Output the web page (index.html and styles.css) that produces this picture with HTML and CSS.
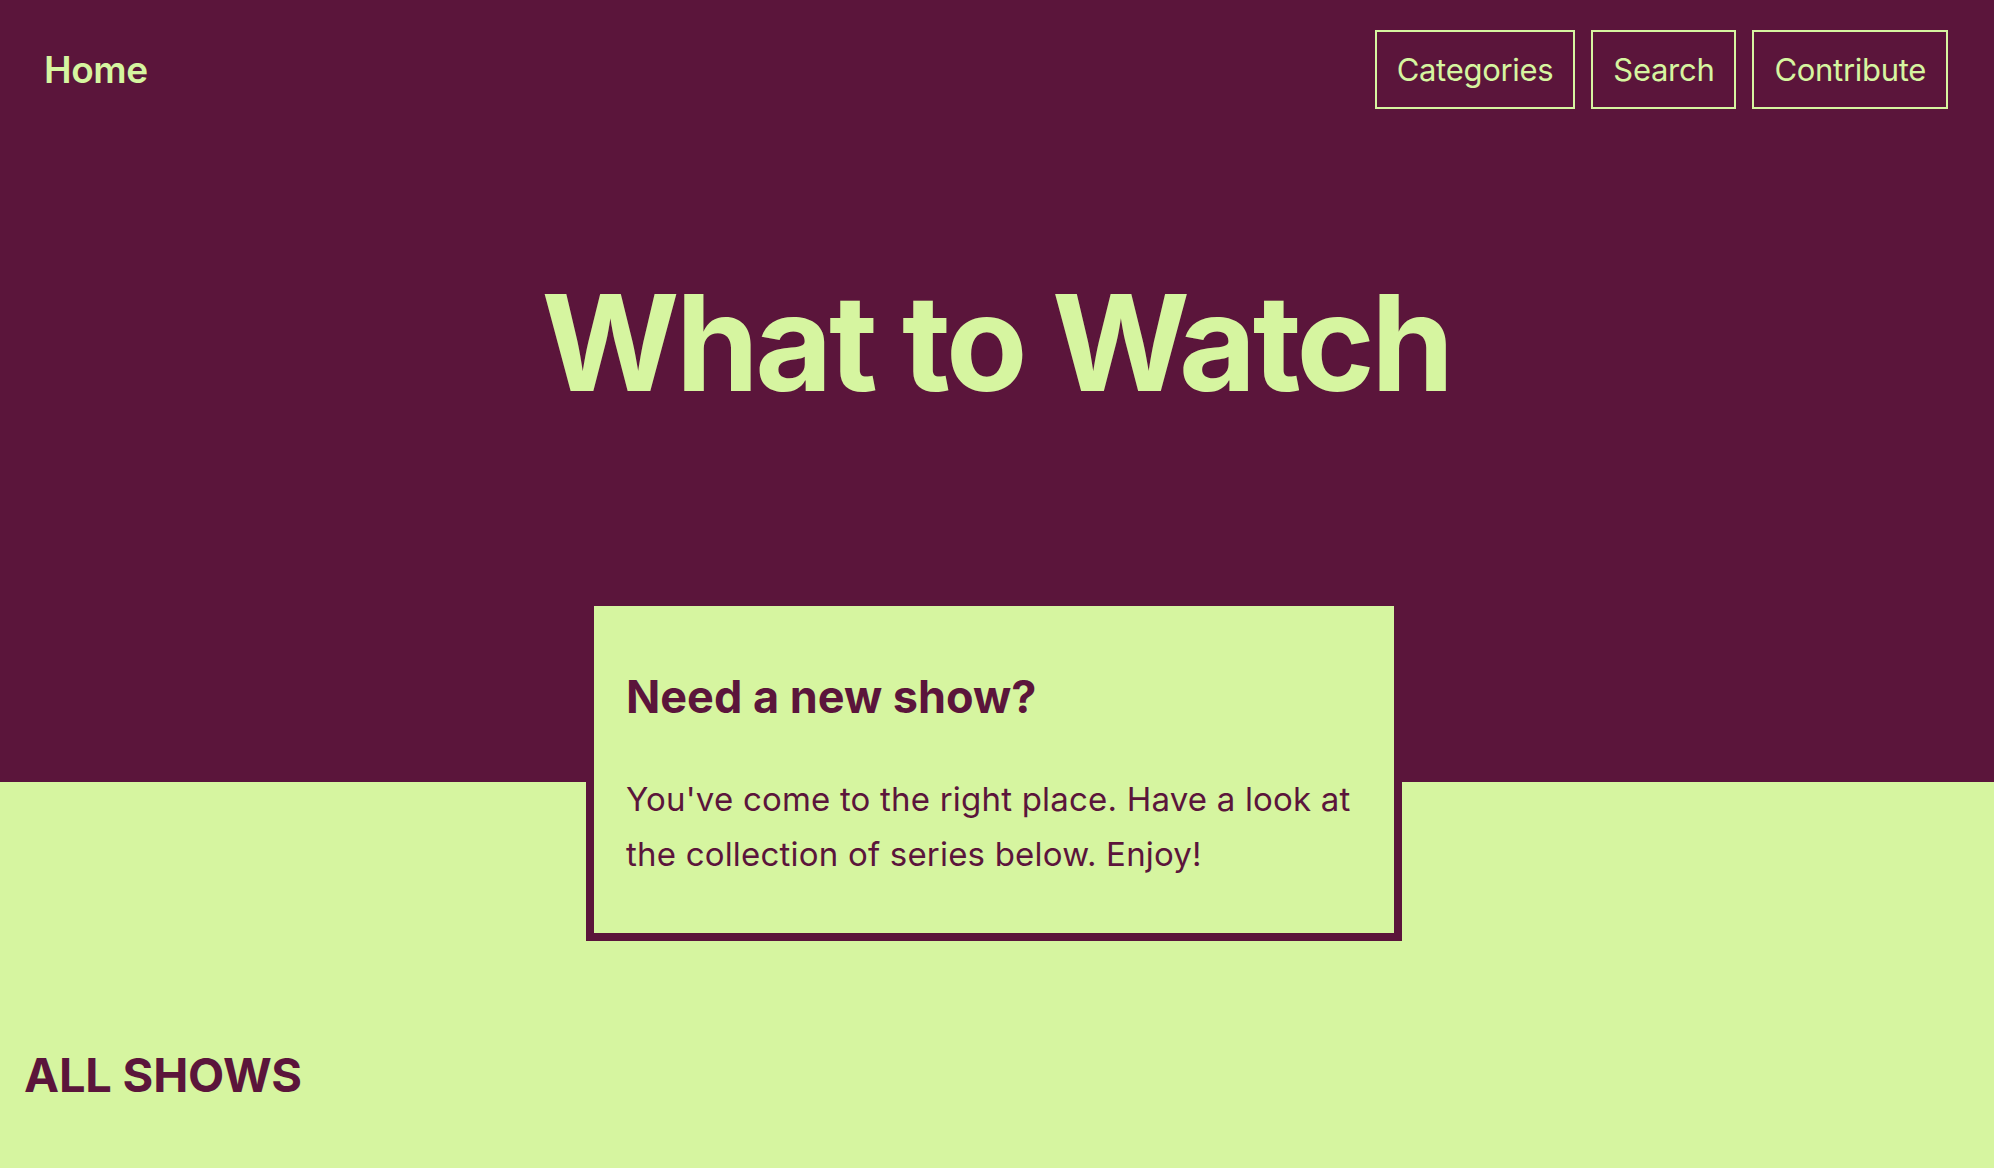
FILE: index.html
```html
<!DOCTYPE html>
<html lang="en">
<head>
<meta charset="utf-8">
<title>What to Watch</title>
<link rel="stylesheet" href="styles.css">
</head>
<body>
<header class="hero">
  <nav class="nav">
    <a class="nav-home" href="#">Home</a>
    <div class="nav-links">
      <a class="nav-btn" href="#">Categories</a>
      <a class="nav-btn" href="#">Search</a>
      <a class="nav-btn" href="#">Contribute</a>
    </div>
  </nav>
  <h1 class="hero-title">What to Watch</h1>
</header>
<main class="main">
  <section class="intro-card">
    <h2 class="intro-title">Need a new show?</h2>
    <p class="intro-text">You've come to the right place. Have a look at the collection of series below. Enjoy!</p>
  </section>
  <h2 class="section-title">ALL SHOWS</h2>
</main>
</body>
</html>
```
FILE: styles.css
```css
* { box-sizing: border-box; }
html, body {
  margin: 0;
  padding: 0;
}
body {
  font-family: Inter, "Noto Sans", "Liberation Sans", sans-serif;
  background: #d6f5a0;
  color: #5b153b;
}
.hero {
  background: #5b153b;
  color: #d6f5a0;
  padding: 30px 46px 359px 44px;
}
.nav {
  display: flex;
  align-items: center;
  justify-content: space-between;
}
.nav-home {
  color: #d6f5a0;
  text-decoration: none;
  font-size: 37px;
  font-weight: 600;
  letter-spacing: -0.4px;
}
.nav-links {
  display: flex;
  gap: 16px;
}
.nav-btn {
  display: flex;
  align-items: center;
  height: 79px;
  padding: 0 20px;
  border: 2px solid #d6f5a0;
  color: #d6f5a0;
  text-decoration: none;
  font-size: 31px;
  font-weight: 400;
  letter-spacing: -0.3px;
}
.hero-title {
  margin: 154px 0 0;
  text-align: center;
  font-size: 133px;
  line-height: 1.2;
  font-weight: 700;
  letter-spacing: -3.5px;
}
.main {
  padding: 0 30px 40px 24px;
}
.intro-card {
  width: 816px;
  margin: -184px auto 0;
  border: 8px solid #5b153b;
  background: #d6f5a0;
  padding: 32px 32px 51px;
}
.intro-title {
  margin: 32px 0 48px;
  font-size: 45px;
  line-height: 1.2;
  font-weight: 700;
  letter-spacing: 0;
}
.intro-text {
  margin: 0;
  font-size: 33px;
  line-height: 55px;
  font-weight: 400;
  letter-spacing: 0.2px;
}
.section-title {
  margin: 106px 0 0;
  font-size: 47px;
  line-height: 1.2;
  font-weight: 700;
  letter-spacing: -0.2px;
}
```
